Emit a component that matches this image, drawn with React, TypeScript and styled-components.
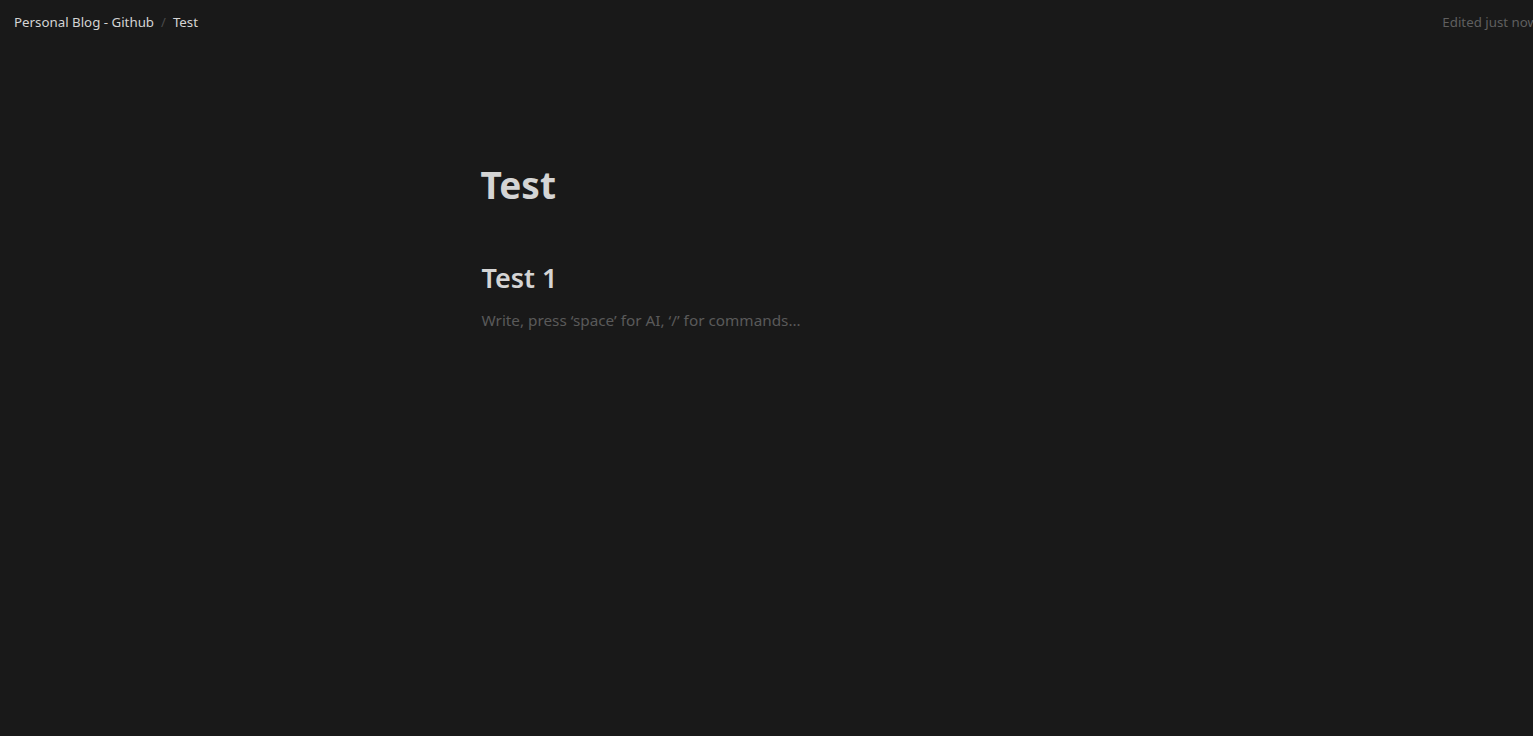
import React from "react";
import styled, { createGlobalStyle } from "styled-components";

const Global = createGlobalStyle`
  html, body {
    margin: 0;
    padding: 0;
    background: #191919;
    overflow: hidden;
  }
  body {
    font-family: "Noto Sans", "Open Sans", "Liberation Sans", sans-serif;
    -webkit-font-smoothing: antialiased;
  }
`;

const Page = styled.div`
  width: 100vw;
  height: 100vh;
  background: #191919;
  display: flex;
  flex-direction: column;
  overflow: hidden;
`;

const TopBar = styled.header`
  width: calc(100vw + 24px);
  height: 44px;
  flex: none;
  display: flex;
  align-items: center;
  justify-content: space-between;
  padding: 0 19px 0 14px;
  box-sizing: border-box;
`;

const Crumbs = styled.nav`
  display: flex;
  align-items: center;
  gap: 7px;
`;

const Crumb = styled.span`
  font-size: 13.3px;
  color: #d4d4d4;
  white-space: nowrap;
`;

const Sep = styled.span`
  font-size: 13px;
  color: #4a4a4a;
`;

const Edited = styled.span`
  font-size: 13.3px;
  color: #5f5f5f;
  white-space: nowrap;
`;

const Editor = styled.main`
  width: 572px;
  margin: 0 auto;
  padding-top: 119px;
  display: flex;
  flex-direction: column;
`;

const Title = styled.h1`
  margin: 0;
  font-size: 37px;
  font-weight: 700;
  line-height: 1.2;
  color: #d4d4d4;
`;

const Heading = styled.h2`
  margin: 53px 0 0 1px;
  font-size: 27px;
  font-weight: 600;
  line-height: 1.3;
  color: #d4d4d4;
`;

const Placeholder = styled.p`
  margin: 14px 0 0 1px;
  font-size: 15.3px;
  line-height: 1.5;
  color: #5a5a5a;
`;

export default function App() {
  return (
    <Page>
      <Global />
      <TopBar>
        <Crumbs>
          <Crumb>Personal Blog - Github</Crumb>
          <Sep>/</Sep>
          <Crumb>Test</Crumb>
        </Crumbs>
        <Edited>Edited just now</Edited>
      </TopBar>
      <Editor>
        <Title>Test</Title>
        <Heading>Test 1</Heading>
        <Placeholder>Write, press ‘space’ for AI, ‘/’ for commands…</Placeholder>
      </Editor>
    </Page>
  );
}
